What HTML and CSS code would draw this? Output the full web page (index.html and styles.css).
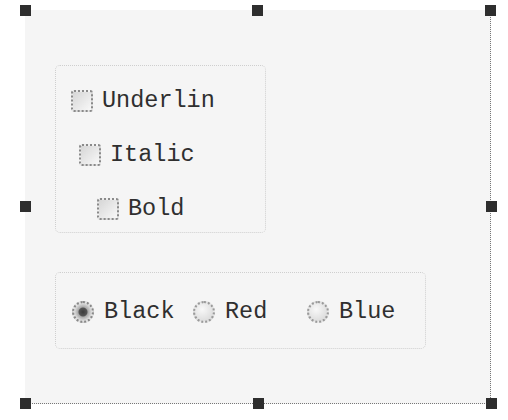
FILE: index.html
```html
<!DOCTYPE html>
<html lang="en">
<head>
  <meta charset="UTF-8" />
  <title>Form Designer</title>
  <link rel="stylesheet" href="styles.css">
</head>
<body>
  <div class="designer">
    <div class="form">
      <div class="group group-checks">
        <label class="check row-1"><span class="box"></span>Underlin</label>
        <label class="check row-2"><span class="box"></span>Italic</label>
        <label class="check row-3"><span class="box"></span>Bold</label>
      </div>
      <div class="group group-radios">
        <label class="radio radio-black"><span class="dot checked"></span>Black</label>
        <label class="radio radio-red"><span class="dot"></span>Red</label>
        <label class="radio"><span class="dot"></span>Blue</label>
      </div>
    </div>

    <!-- selection handles -->
    <span class="handle h-tl"></span>
    <span class="handle h-tm"></span>
    <span class="handle h-tr"></span>
    <span class="handle h-ml"></span>
    <span class="handle h-mr"></span>
    <span class="handle h-bl"></span>
    <span class="handle h-bm"></span>
    <span class="handle h-br"></span>
  </div>
</body>
</html>
```

FILE: styles.css
```css
body {
  margin: 0;
  background: #fff;
  font-family: "Liberation Mono", "DejaVu Sans Mono", monospace;
  color: #2f2f2f;
}
.designer {
  position: relative;
  width: 508px;
  height: 420px;
  padding: 10px 0 0 25px;
  box-sizing: border-box;
}
.form {
  width: 466px;
  height: 394px;
  box-sizing: border-box;
  background: #f5f5f5;
  border-right: 1px dotted #777;
  border-bottom: 1px dotted #777;
  padding: 55px 0 0 30px;
}
.group {
  border: 1px dotted #cfcfcf;
  border-radius: 5px;
  box-sizing: border-box;
}
.group-checks {
  width: 211px;
  height: 168px;
  padding-top: 8px;
}
.group-radios {
  width: 371px;
  height: 77px;
  margin-top: 39px;
  display: flex;
  align-items: center;
  padding-left: 16px;
  padding-top: 3px;
}
label {
  display: flex;
  align-items: center;
  font-size: 23.5px;
  line-height: 1;
}
.check {
  height: 54px;
}
.row-1 { margin-left: 15px; }
.row-2 { margin-left: 23px; }
.row-3 { margin-left: 41px; }
.box {
  width: 22px;
  height: 22px;
  box-sizing: border-box;
  margin-right: 9px;
  border: 2px dotted #8a8a8a;
  border-radius: 3px;
  background: linear-gradient(135deg, #d6d6d6, #f8f8f8);
}
.radio-black { width: 121px; }
.radio-red { width: 114px; }
.dot {
  width: 22px;
  height: 22px;
  box-sizing: border-box;
  margin-right: 10px;
  border: 2px dotted #9a9a9a;
  border-radius: 50%;
  background: radial-gradient(circle at 40% 35%, #f8f8f8, #d4d4d4);
}
.dot.checked {
  background: radial-gradient(circle, #3c3c3c 0, #555 4px, #aaa 5px, #e2e2e2 9px);
  border-color: #888;
}
.handle {
  position: absolute;
  width: 11px;
  height: 11px;
  background: #2e2e2e;
}
.h-tl { left: 20px; top: 5px; }
.h-tm { left: 252px; top: 5px; }
.h-tr { left: 485px; top: 5px; }
.h-ml { left: 20px; top: 201px; }
.h-mr { left: 486px; top: 201px; }
.h-bl { left: 20px; top: 398px; }
.h-bm { left: 253px; top: 398px; }
.h-br { left: 486px; top: 398px; }
```
